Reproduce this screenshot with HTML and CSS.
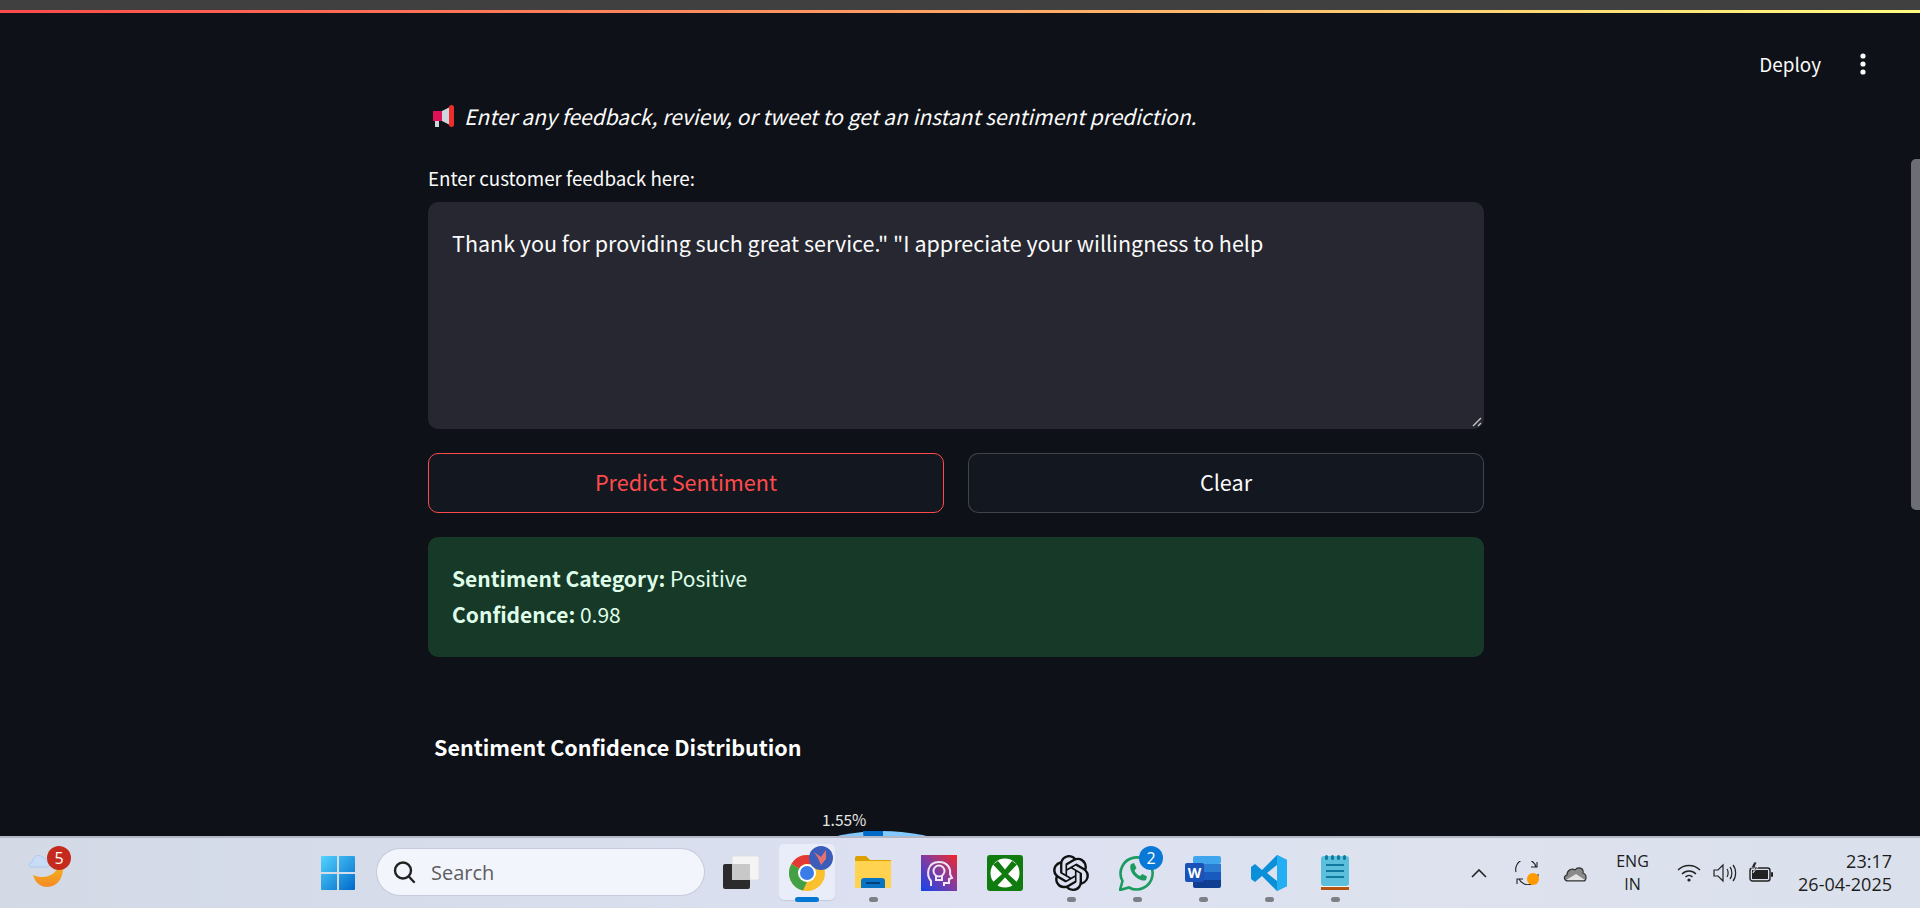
FILE: index.html
```html
<!DOCTYPE html>
<html lang="en">
<head>
    <meta charset="UTF-8">
    <title>Sentiment Prediction</title>
    <link rel="stylesheet" href="styles.css">
</head>
<body>
    <div class="screen">
        <div class="top-strip"></div>
        <div class="decoration"></div>

        <main class="app">
            <div class="toolbar">
                <span class="deploy">Deploy</span>
                <svg class="kebab" width="8" height="24" viewBox="0 0 8 24"><circle cx="4" cy="4" r="2.6"/><circle cx="4" cy="12" r="2.6"/><circle cx="4" cy="20" r="2.6"/></svg>
            </div>

            <div class="content">
                <p class="intro">
                    <svg class="megaphone" width="24" height="24" viewBox="0 0 24 24">
                        <rect x="3" y="16" width="4" height="7" fill="#ccd6dd"/>
                        <rect x="1" y="7" width="9" height="10" fill="#dd1155"/>
                        <path d="M10 7 L18 3 V21 L10 17 Z" fill="#ccd6dd"/>
                        <rect x="17" y="1" width="5" height="22" rx="2.5" fill="#f02d2d"/>
                    </svg>
                    <em>Enter any feedback, review, or tweet to get an instant sentiment prediction.</em>
                </p>

                <label class="field-label">Enter customer feedback here:</label>
                <div class="textarea">
                    Thank you for providing such great service." "I appreciate your willingness to help
                    <svg class="resizer" width="12" height="12" viewBox="0 0 12 12"><path d="M2 10 L10 2 M7 10 L10 7" stroke="#c4c4c4" stroke-width="1.4"/></svg>
                </div>

                <div class="buttons">
                    <button class="btn btn-primary">Predict Sentiment</button>
                    <button class="btn">Clear</button>
                </div>

                <div class="alert">
                    <div><strong>Sentiment Category:</strong> Positive</div>
                    <div><strong>Confidence:</strong> 0.98</div>
                </div>

                <h3 class="chart-title">Sentiment Confidence Distribution</h3>

                <div class="chart">
                    <span class="pie-label">1.55%</span>
                    <svg class="pie" width="400" height="400" viewBox="0 0 400 400">
                        <circle cx="200" cy="200" r="200" fill="#83c9ff"/>
                        <path d="M200 200 L181 0 L201 0 Z" fill="#0068c9"/>
                    </svg>
                </div>
            </div>

            <div class="scrollbar"></div>
        </main>

        <footer class="taskbar">
            <div class="weather">
                <svg width="40" height="44" viewBox="0 0 40 44">
                    <defs>
                        <linearGradient id="sunGrad" x1="0" y1="0" x2="0" y2="1">
                            <stop offset="0" stop-color="#f5b01e"/>
                            <stop offset="1" stop-color="#f58a23"/>
                        </linearGradient>
                    </defs>
                    <path d="M8 30 C10 38 16 42 22 42 C32 42 38 33 38 24 L33 22 C30 30 20 35 8 30 Z" fill="url(#sunGrad)"/>
                    <path d="M6 22 C3 22 4 17 7 17 C8 12 13 8 17 12 C20 12 22 15 22 17 C25 18 25 22 22 22 Z" fill="#c8dcf6" stroke="#a3c1ec" stroke-width=".7"/>
                </svg>
                <span class="badge badge-red">5</span>
            </div>

            <div class="task-icons">
                <div class="tile">
                    <svg width="36" height="36" viewBox="0 0 36 36">
                        <defs>
                            <linearGradient id="winGrad" x1="0" y1="0" x2="1" y2="1">
                                <stop offset="0" stop-color="#53d3ff"/>
                                <stop offset="1" stop-color="#0069c8"/>
                            </linearGradient>
                        </defs>
                        <path d="M1 2 Q1 1 2 1 H17 V17 H1 Z M19 1 H34 Q35 1 35 2 V17 H19 Z M1 19 H17 V35 H2 Q1 35 1 34 Z M19 19 H35 V34 Q35 35 34 35 H19 Z" fill="url(#winGrad)"/>
                    </svg>
                </div>

                <div class="search">
                    <svg width="24" height="24" viewBox="0 0 24 24" fill="none" stroke="#222" stroke-width="2.4"><circle cx="11" cy="10.5" r="8"/><path d="M16.8 16.5 L22 22" stroke-linecap="round"/></svg>
                    <span>Search</span>
                </div>

                <div class="tile">
                    <svg width="38" height="36" viewBox="0 0 38 36">
                        <rect x="10" y="1" width="27" height="24" rx="2" fill="#f4f4f4" stroke="#e0e0e0"/>
                        <rect x="1" y="9" width="27" height="25" rx="2" fill="#2b2b2b"/>
                        <rect x="10" y="9" width="18" height="16" fill="#c8c8c8"/>
                    </svg>
                </div>

                <div class="tile tile-active">
                    <svg width="36" height="36" viewBox="0 0 36 36">
                        <circle cx="18" cy="18" r="18" fill="#fbc02d"/>
                        <path d="M18 0 A18 18 0 0 1 33.6 9 H18 A9 9 0 0 0 10.2 13.5 L2.4 9 A18 18 0 0 1 18 0 Z" fill="#e53935"/>
                        <path d="M2.4 9 L10.2 13.5 L18 27 L14 35.6 A18 18 0 0 1 2.4 9 Z" fill="#43a047"/>
                        <circle cx="18" cy="18" r="9" fill="#fff"/>
                        <circle cx="18" cy="18" r="7" fill="#3b7de8"/>
                    </svg>
                    <span class="badge badge-indigo">
                        <svg width="18" height="18" viewBox="0 0 18 18"><path d="M2 3 L9 8 L14 1 L14 10 L9 16 L6 9 Z" fill="#e8716e"/></svg>
                    </span>
                    <span class="running running-active"></span>
                </div>

                <div class="tile">
                    <svg width="36" height="34" viewBox="0 0 36 34">
                        <path d="M0 2 Q0 0 2 0 H11 L15 4 H36 V10 H0 Z" fill="#dca000"/>
                        <path d="M0 5 H36 V32 H0 Z" fill="#ffd24f"/>
                        <path d="M6 32 V25 Q6 22 9 22 H27 Q30 22 30 25 V32 Z" fill="#0a74c4"/>
                        <rect x="11" y="26" width="14" height="2" fill="#053f78"/>
                    </svg>
                    <span class="running"></span>
                </div>

                <div class="tile">
                    <svg width="36" height="36" viewBox="0 0 36 36">
                        <defs>
                            <linearGradient id="appGrad" x1="0" y1="1" x2="1" y2="0">
                                <stop offset="0" stop-color="#1144ee"/>
                                <stop offset=".55" stop-color="#8a3a9a"/>
                                <stop offset="1" stop-color="#f32626"/>
                            </linearGradient>
                        </defs>
                        <rect width="36" height="36" fill="url(#appGrad)"/>
                        <path d="M10 31 V26 C5 20 6 7 18 7 C26 7 30 13 29 19 L31 23 L28 24 V28 H23 V31" fill="none" stroke="#f0e6f4" stroke-width="2"/>
                        <circle cx="18" cy="16" r="5.5" fill="none" stroke="#f0e6f4" stroke-width="2"/>
                        <path d="M15 21 V25 H21 V21" fill="none" stroke="#f0e6f4" stroke-width="2"/>
                    </svg>
                </div>

                <div class="tile">
                    <svg width="36" height="36" viewBox="0 0 36 36">
                        <rect width="36" height="36" rx="3" fill="#107c10"/>
                        <circle cx="18" cy="18" r="14.5" fill="#fff"/>
                        <path d="M18 14.5 L11 6 L6 9.5 L15 19 L5 28 L9 32 L18 22.5 L27 32 L31 28 L21 19 L30 9.5 L25 6 Z" fill="#107c10"/>
                    </svg>
                </div>

                <div class="tile">
                    <svg width="36" height="36" viewBox="0 0 24 24" fill="#111">
                        <path d="M22.2819 9.8211a5.9847 5.9847 0 0 0-.5157-4.9108 6.0462 6.0462 0 0 0-6.5098-2.9A6.0651 6.0651 0 0 0 4.9807 4.1818a5.9847 5.9847 0 0 0-3.9977 2.9 6.0462 6.0462 0 0 0 .7427 7.0966 5.98 5.98 0 0 0 .511 4.9107 6.051 6.051 0 0 0 6.5146 2.9001A5.9847 5.9847 0 0 0 13.2599 24a6.0557 6.0557 0 0 0 5.7718-4.2058 5.9894 5.9894 0 0 0 3.9977-2.9001 6.0557 6.0557 0 0 0-.7475-7.0729zm-9.022 12.6081a4.4755 4.4755 0 0 1-2.8764-1.0408l.1419-.0804 4.7783-2.7582a.7948.7948 0 0 0 .3927-.6813v-6.7369l2.02 1.1686a.071.071 0 0 1 .038.052v5.5826a4.504 4.504 0 0 1-4.4945 4.4944zm-9.6607-4.1254a4.4708 4.4708 0 0 1-.5346-3.0137l.142.0852 4.783 2.7582a.7712.7712 0 0 0 .7806 0l5.8428-3.3685v2.3324a.0804.0804 0 0 1-.0332.0615L9.74 19.9502a4.4992 4.4992 0 0 1-6.1408-1.6464zM2.3408 7.8956a4.485 4.485 0 0 1 2.3655-1.9728V11.6a.7664.7664 0 0 0 .3879.6765l5.8144 3.3543-2.0201 1.1685a.0757.0757 0 0 1-.071 0l-4.8303-2.7865A4.504 4.504 0 0 1 2.3408 7.872zm16.5963 3.8558L13.1038 8.364 15.1192 7.2a.0757.0757 0 0 1 .071 0l4.8303 2.7913a4.4944 4.4944 0 0 1-.6765 8.1042v-5.6772a.79.79 0 0 0-.407-.667zm2.0107-3.0231l-.142-.0852-4.7735-2.7818a.7759.7759 0 0 0-.7854 0L9.409 9.2297V6.8974a.0662.0662 0 0 1 .0284-.0615l4.8303-2.7866a4.4992 4.4992 0 0 1 6.6802 4.66zM8.3065 12.863l-2.02-1.1638a.0804.0804 0 0 1-.038-.0567V6.0742a4.4992 4.4992 0 0 1 7.3757-3.4537l-.142.0805L8.704 5.459a.7948.7948 0 0 0-.3927.6813zm1.0976-2.3654l2.602-1.4998 2.6069 1.4998v2.9994l-2.5974 1.4997-2.6067-1.4997Z"/>
                    </svg>
                    <span class="running"></span>
                </div>

                <div class="tile">
                    <svg width="36" height="36" viewBox="0 0 36 36">
                        <path d="M1 35 L3.5 26 A16 16 0 1 1 10 32.5 Z" fill="none" stroke="#1c9b5e" stroke-width="2.6"/>
                        <path d="M12 9 L15 8 L17.5 13 L15.5 15.5 C16.5 18 18.5 20 21 21 L23.5 19 L28 21.5 L27 25 C21 28 8 17 12 9 Z" fill="#1c9b5e"/>
                    </svg>
                    <span class="badge badge-blue">2</span>
                    <span class="running"></span>
                </div>

                <div class="tile">
                    <svg width="36" height="34" viewBox="0 0 36 34">
                        <rect x="8" y="0" width="28" height="8" rx="2" fill="#41a5ee"/>
                        <rect x="8" y="8" width="28" height="8" fill="#2b7cd3"/>
                        <rect x="8" y="16" width="28" height="8" fill="#185abd"/>
                        <path d="M8 24 H36 V30 Q36 32 34 32 H10 Q8 32 8 30 Z" fill="#103f91"/>
                        <rect x="0" y="7" width="19" height="19" rx="2" fill="#1a52b8"/>
                        <text x="9.5" y="22" class="word-letter">W</text>
                    </svg>
                    <span class="running"></span>
                </div>

                <div class="tile">
                    <svg width="36" height="36" viewBox="0 0 36 36">
                        <path d="M26 0 L36 5 V31 L26 36 L11 21 L4 27 L0 24 V12 L4 9 L11 15 Z M26 10 L16 18 L26 26 Z" fill="#0a8fd8"/>
                        <path d="M26 0 L36 5 V31 L26 36 Z" fill="#24aef4"/>
                    </svg>
                    <span class="running"></span>
                </div>

                <div class="tile">
                    <svg width="28" height="36" viewBox="0 0 28 36">
                        <rect x="0" y="1" width="28" height="30" rx="3" fill="#5cc0dc"/>
                        <path d="M0 31 H28 V35 H0 Z" fill="#b5540f"/>
                        <path d="M0 31 H28 V32 H0 Z" fill="#f4f4f4"/>
                        <g fill="#0f7a9e">
                            <rect x="4" y="0" width="3" height="5" rx="1.5"/>
                            <rect x="10" y="0" width="3" height="5" rx="1.5"/>
                            <rect x="16" y="0" width="3" height="5" rx="1.5"/>
                            <rect x="22" y="0" width="3" height="5" rx="1.5"/>
                            <rect x="5" y="9" width="18" height="2"/>
                            <rect x="5" y="15" width="18" height="2"/>
                            <rect x="5" y="21" width="18" height="2"/>
                        </g>
                    </svg>
                    <span class="running"></span>
                </div>
            </div>

            <div class="tray">
                <svg class="tray-caret" width="16" height="9" viewBox="0 0 16 9" fill="none" stroke="#222" stroke-width="1.6"><path d="M1 8 L8 1 L15 8"/></svg>

                <div class="tray-sync">
                    <svg width="24" height="24" viewBox="0 0 24 24" fill="none" stroke="#222" stroke-width="1.1">
                        <path d="M1 11 A10 10 0 0 1 21 6 M22 1 V6 H16"/>
                        <path d="M23 13 A10 10 0 0 1 4 18 M2 23 V18 H8"/>
                    </svg>
                    <span class="sync-dot"></span>
                </div>

                <svg class="tray-cloud" width="24" height="17" viewBox="0 0 24 17">
                    <path d="M5 16 C1 16 0 11 4 10 C4 5 9 3 12 5 C15 1 21 3 20 8 C24 9 24 16 20 16 Z" fill="#8a8a8a" stroke="#333" stroke-width="1.2"/>
                    <path d="M3 15 L13 9 L22 15 Z" fill="#e4e4e4"/>
                </svg>

                <div class="lang">ENG<br>IN</div>

                <div class="tray-status">
                    <svg width="24" height="18" viewBox="0 0 24 18" fill="none" stroke="#222" stroke-width="1.4">
                        <path d="M1 6 C7 0 17 0 23 6"/>
                        <path d="M5 10 C9 6 15 6 19 10"/>
                        <path d="M8.5 13 C10.5 11 13.5 11 15.5 13"/>
                        <circle cx="12" cy="16" r="1.6" fill="#222" stroke="none"/>
                    </svg>
                    <svg width="24" height="20" viewBox="0 0 24 20" fill="none" stroke="#222" stroke-width="1.2">
                        <path d="M1 7 H5 L10 2 V18 L5 13 H1 Z"/>
                        <path d="M14 6 C15.5 8 15.5 12 14 14"/>
                        <path d="M17 4 C19.5 7 19.5 13 17 16"/>
                        <path d="M20 2 C23.5 6 23.5 14 20 18"/>
                    </svg>
                    <svg width="24" height="22" viewBox="0 0 24 22">
                        <rect x="1" y="6" width="20" height="13" rx="2.5" fill="none" stroke="#222" stroke-width="1.4"/>
                        <rect x="3" y="8" width="16" height="9" fill="#222"/>
                        <rect x="22" y="10" width="2" height="5" rx="1" fill="#222"/>
                        <path d="M5 0 L2 6 H6 L4 11 L9 5 H6 L8 0 Z" fill="#222" stroke="#dde1ec" stroke-width=".8"/>
                    </svg>
                </div>

                <div class="clock">23:17<br>26-04-2025</div>
            </div>
        </footer>
    </div>
</body>
</html>
```

FILE: styles.css
```css
* {
    box-sizing: border-box;
}
html, body {
    margin: 0;
    height: 100%;
    overflow: hidden;
}
body {
    font-family: "Noto Sans CJK SC", "Source Sans Pro", "Noto Sans", sans-serif;
    color: #fafafa;
    background: #0e1117;
}
.screen {
    height: 908px;
    display: flex;
    flex-direction: column;
}
.top-strip {
    height: 10px;
    background: #404040;
}
.decoration {
    height: 3px;
    background: linear-gradient(90deg, #ff4b4b, #fffd80);
}

/* streamlit part */
.app {
    flex: 1;
    position: relative;
    overflow: hidden;
    background: #0e1117;
}
.toolbar {
    display: flex;
    justify-content: flex-end;
    align-items: center;
    height: 24px;
    margin-top: 39px;
    padding-right: 53px;
    gap: 38px;
    position: absolute;
    top: 0;
    right: 0;
}
.deploy {
    font-size: 18.9px;
    line-height: 24px;
}
.kebab {
    fill: #fafafa;
}
.content {
    width: 1056px;
    margin-left: 428px;
    padding-top: 87px;
}
.intro {
    display: flex;
    align-items: center;
    gap: 8px;
    height: 32px;
    margin: 0 0 34px;
    padding-left: 4px;
    font-size: 21px;
    white-space: nowrap;
}
.field-label {
    display: block;
    font-size: 18.8px;
    line-height: 24px;
    height: 36px;
}
.textarea {
    position: relative;
    height: 227px;
    padding: 26px 24px;
    border-radius: 10px;
    background: #262730;
    font-size: 21.5px;
    line-height: 30px;
}
.resizer {
    position: absolute;
    right: 1px;
    bottom: 1px;
}
.buttons {
    display: grid;
    grid-template-columns: 1fr 1fr;
    gap: 24px;
    margin-top: 24px;
}
.btn {
    height: 60px;
    padding: 0 0 4px;
    border: 1px solid rgba(250, 250, 250, 0.2);
    border-radius: 10px;
    background: #131720;
    color: #fafafa;
    font-family: inherit;
    font-size: 21.6px;
}
.btn-primary {
    border-color: #ff4b4b;
    color: #ff4b4b;
}
.alert {
    margin-top: 24px;
    height: 120px;
    padding: 23px 24px;
    border-radius: 10px;
    background: #173928;
    color: #dffde9;
    font-size: 21px;
    line-height: 36px;
}
.alert strong {
    font-weight: 700;
}
.chart-title {
    margin: 75px 0 0 6px;
    font-size: 21.5px;
    line-height: 30px;
    font-weight: 700;
    color: #fff;
}
.chart {
    position: relative;
    height: 200px;
    margin-top: 47px;
}
.pie-label {
    position: absolute;
    top: 0;
    left: 394px;
    font-size: 15.5px;
    line-height: 20px;
    color: #e6e6e6;
}
.pie {
    position: absolute;
    top: 22px;
    left: 254px;
}
.scrollbar {
    position: absolute;
    top: 146px;
    right: 0;
    width: 9px;
    height: 351px;
    border-radius: 5px 0 0 5px;
    background: #6d6e73;
}

/* windows taskbar */
.taskbar {
    display: flex;
    position: relative;
    height: 72px;
    border-top: 2px solid #b4b8c6;
    background: linear-gradient(90deg, #d3dae6 0%, #d6dcea 20%, #dde1f2 50%, #dde2ee 75%, #dbe1ec 100%);
    color: #1c1c1c;
}
.weather {
    position: relative;
    width: 305px;
    padding: 7px 0 0 25px;
}
.task-icons {
    display: flex;
}
.tile {
    position: relative;
    width: 66px;
    height: 70px;
    display: flex;
    align-items: center;
    justify-content: center;
}
.tile-active::before {
    content: "";
    position: absolute;
    left: 5px;
    top: 6px;
    width: 56px;
    height: 56px;
    border-radius: 5px;
    background: #e9edf9;
    box-shadow: 0 1px 1px #c5cadb;
}
.tile svg {
    position: relative;
}
.running {
    position: absolute;
    left: 29px;
    bottom: 6px;
    width: 9px;
    height: 5px;
    border-radius: 3px;
    background: #7d7f86;
}
.running-active {
    left: 21px;
    width: 24px;
    background: #0078d4;
}
.badge {
    position: absolute;
    display: flex;
    align-items: center;
    justify-content: center;
    width: 24px;
    height: 24px;
    border-radius: 50%;
    color: #fff;
    font-family: "Open Sans", sans-serif;
    font-size: 16px;
}
.weather .badge {
    left: 47px;
    top: 8px;
}
.tile .badge {
    left: 35px;
    top: 8px;
}
.badge-red {
    background: #c42b1c;
}
.badge-indigo {
    background: #3b5cb8;
}
.badge-blue {
    background: #0a78d7;
}
.search {
    display: flex;
    align-items: center;
    gap: 15px;
    width: 327px;
    height: 46px;
    margin: 11px 4px 0 6px;
    padding-left: 15px;
    border-radius: 23px;
    background: #f2f5fc;
    box-shadow: 0 0 0 1px #c6cbdc;
    font-family: "Open Sans", sans-serif;
    font-size: 20px;
    color: #5d5d5d;
}
.word-letter {
    font-family: "Open Sans", sans-serif;
    font-size: 14px;
    font-weight: 700;
    fill: #fff;
    text-anchor: middle;
}
.tray {
    display: flex;
    align-items: center;
    margin-left: auto;
    padding-right: 28px;
    font-family: "Open Sans", sans-serif;
    font-size: 16px;
}
.tray-caret {
    margin-right: 28px;
}
.tray-sync {
    position: relative;
    width: 24px;
    height: 24px;
    margin-right: 24px;
}
.sync-dot {
    position: absolute;
    right: 0;
    bottom: 0;
    width: 12px;
    height: 12px;
    border-radius: 50%;
    background: #ff9a00;
}
.tray-cloud {
    margin-right: 28px;
}
.lang {
    width: 35px;
    text-align: center;
    line-height: 23px;
    margin-right: 27px;
}
.tray-status {
    display: flex;
    align-items: center;
    gap: 12px;
    margin-right: 24px;
}
.clock {
    width: 95px;
    text-align: right;
    font-size: 18px;
    line-height: 23px;
    white-space: nowrap;
}
```
